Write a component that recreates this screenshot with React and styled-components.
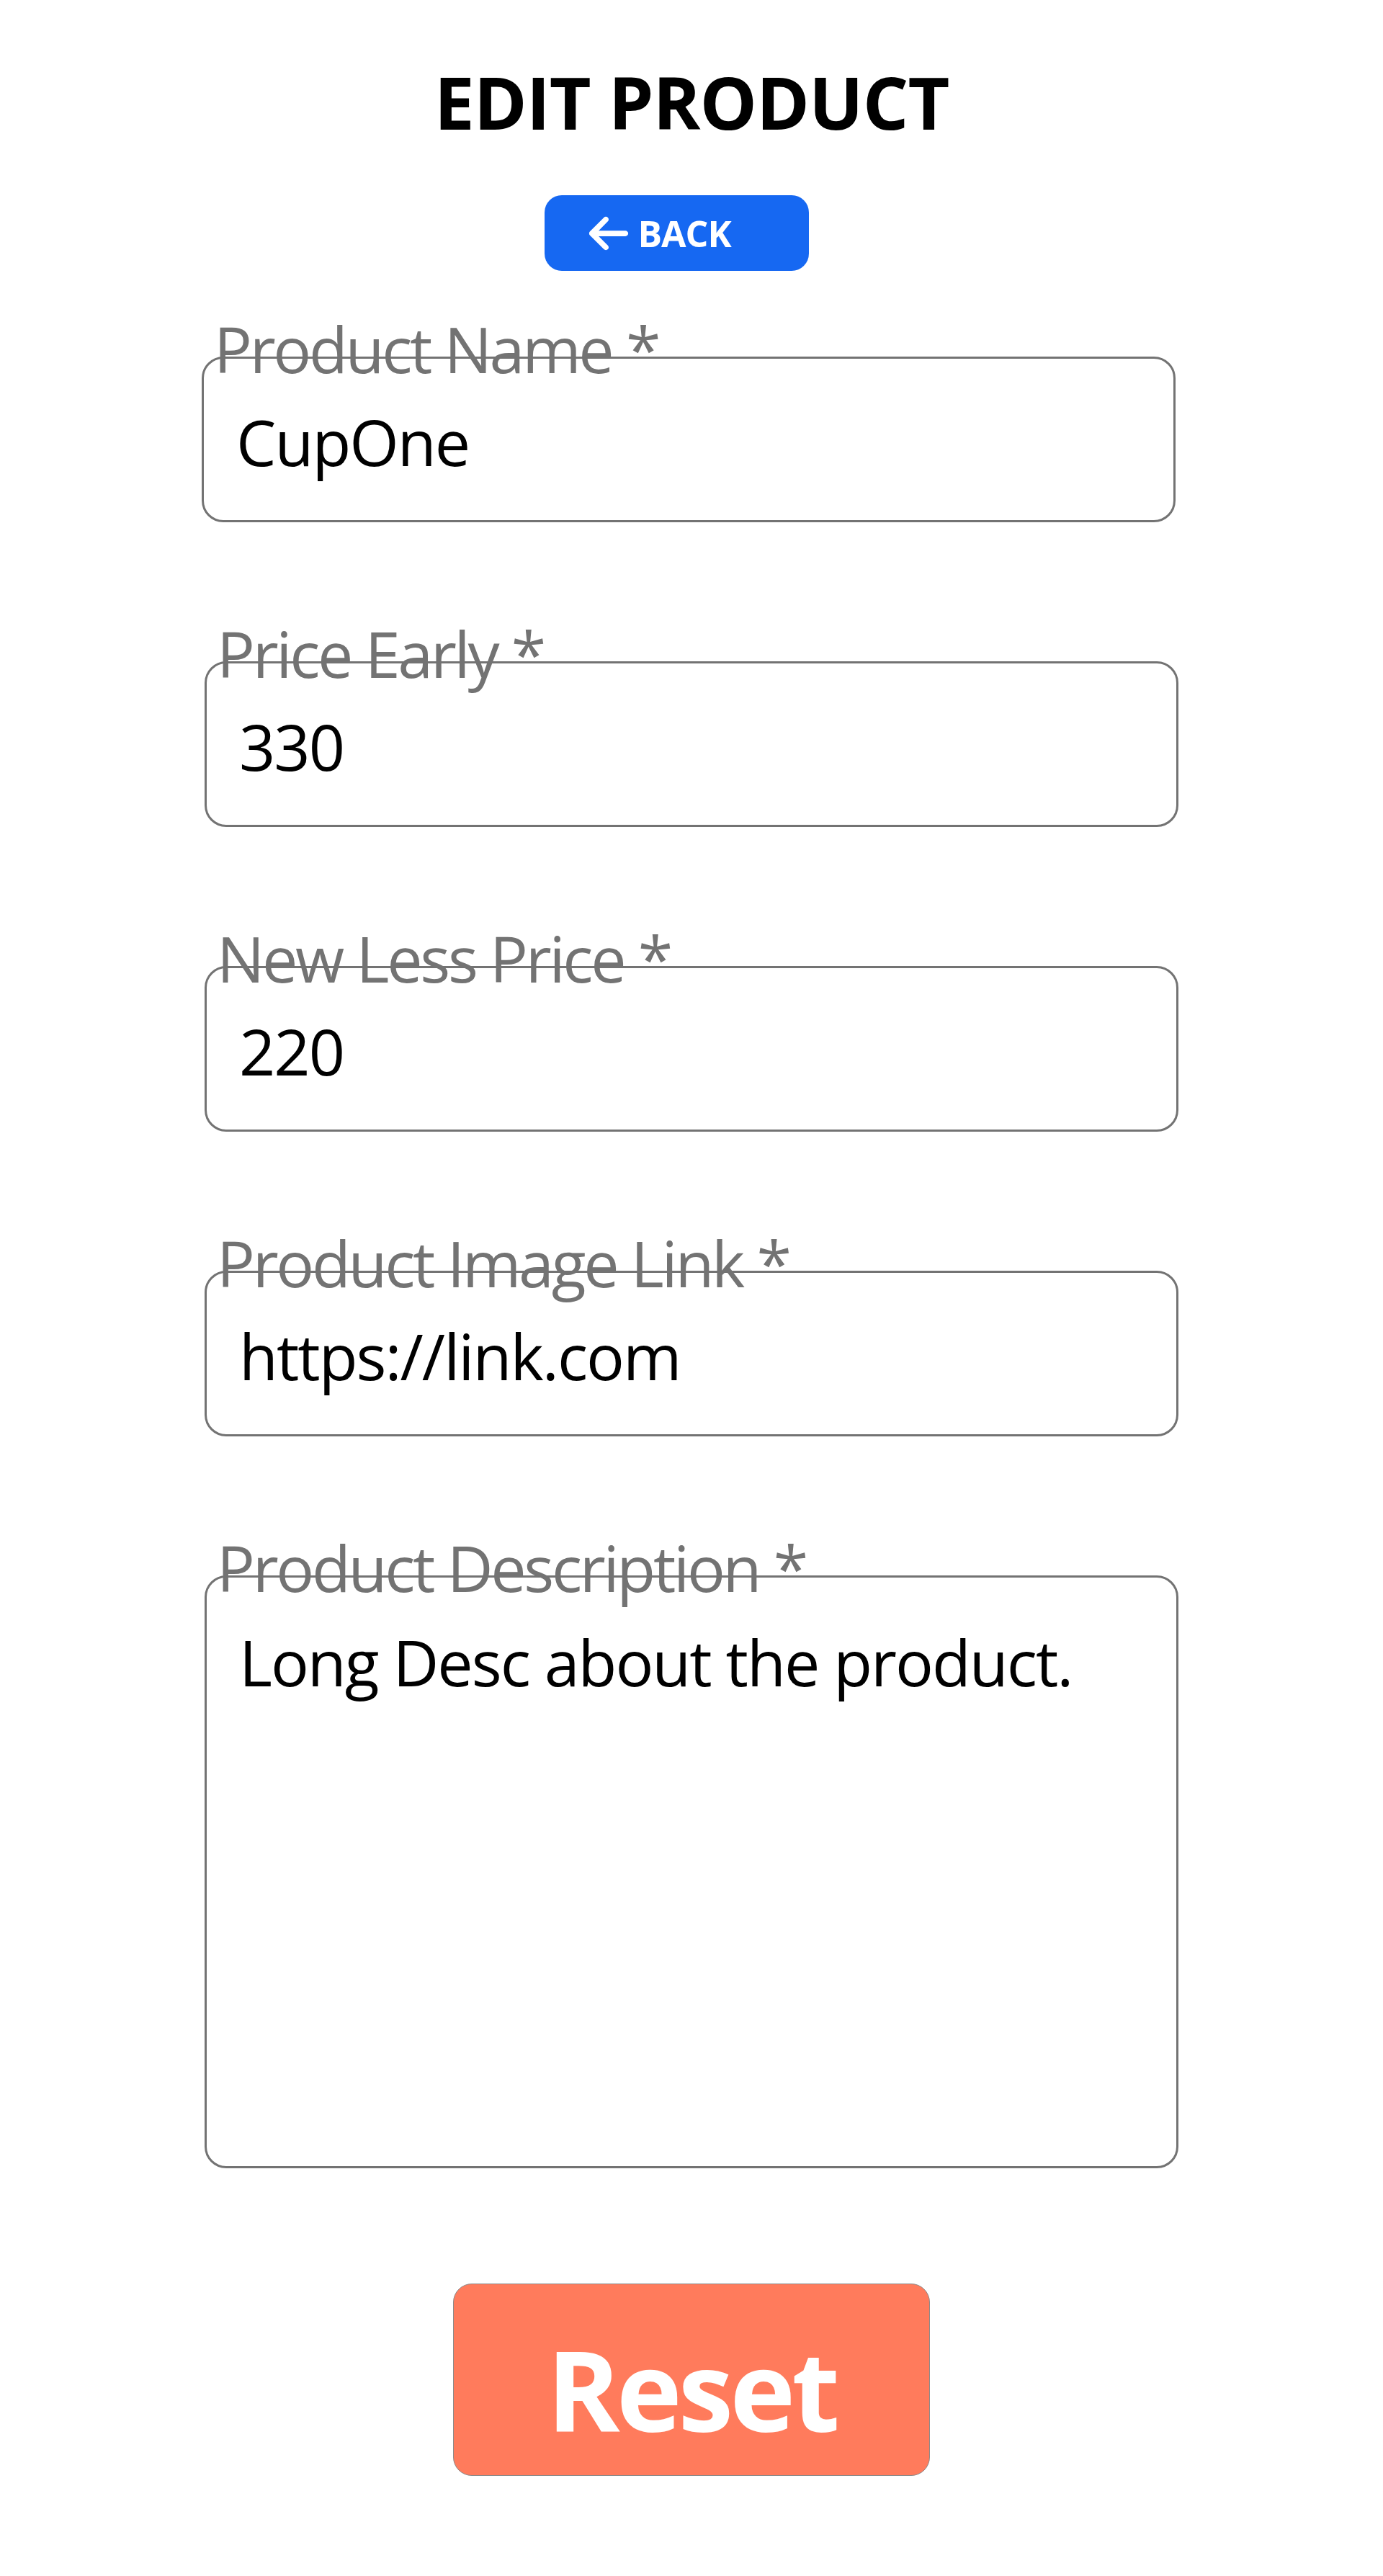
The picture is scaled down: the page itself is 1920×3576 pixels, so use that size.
import React from "react";
import styled, { createGlobalStyle } from "styled-components";
import { FaArrowLeft } from "react-icons/fa6";

const GlobalStyle = createGlobalStyle`
  html, body {
    margin: 0;
    padding: 0;
    background: #ffffff;
  }
  body {
    font-family: "Open Sans", "Noto Sans", sans-serif;
  }
  * { box-sizing: border-box; }
`;

const Page = styled.main`
  display: flex;
  flex-direction: column;
  align-items: center;
  padding: 91px 0 139px;
`;

const Title = styled.h1`
  margin: 0;
  font-size: 100px;
  line-height: 100px;
  font-weight: 700;
  color: #000;
  letter-spacing: -1px;
`;

const BackRow = styled.div`
  margin-top: 80px;
  width: 100%;
  display: flex;
  justify-content: center;
`;

const BackButton = styled.button`
  width: 367px;
  height: 105px;
  margin-right: 42px;
  padding: 0 0 0 58px;
  display: flex;
  align-items: center;
  gap: 10px;
  border: none;
  border-radius: 24px;
  background: #1668f2;
  color: #fff;
  font-family: inherit;
  font-size: 50px;
  font-weight: 700;
  line-height: 1;
  letter-spacing: -1px;
  cursor: pointer;
  svg { flex: none; }
`;

const Form = styled.form`
  margin-top: 64px;
  width: 1352px;
  display: flex;
  flex-direction: column;
  gap: 138px;
`;

const Field = styled.div`
  display: flex;
  flex-direction: column;
  margin-left: ${(p) => (p.$shift ? `${p.$shift}px` : "0")};
  margin-right: ${(p) => (p.$shift ? `${-p.$shift}px` : "0")};
`;

const Label = styled.label`
  position: relative;
  z-index: 1;
  display: block;
  font-size: 88px;
  line-height: 88px;
  color: #737373;
  padding-left: 17px;
  margin-bottom: -33px;
  letter-spacing: -3.3px;
  white-space: nowrap;
`;

const boxStyles = `
  width: 100%;
  border: 3px solid #737373;
  border-radius: 30px;
  background: transparent;
  font-family: "Open Sans", "Noto Sans", sans-serif;
  font-size: 88px;
  color: #000;
  outline: none;
  letter-spacing: -2px;
`;

const Input = styled.input`
  ${boxStyles}
  height: 230px;
  padding: 6px 40px 0 45px;
`;

const TextArea = styled.textarea`
  ${boxStyles}
  height: 823px;
  padding: 57px 45px 0 45px;
  line-height: normal;
  resize: none;
  display: block;
`;

const ResetButton = styled.button`
  margin-top: 160px;
  width: 662px;
  height: 267px;
  padding: 22px 0 0;
  border: 1px solid #8a8a8a;
  border-radius: 26px;
  background: #ff7b5c;
  color: #fff;
  font-family: inherit;
  font-size: 154px;
  font-weight: 700;
  line-height: 1;
  letter-spacing: -5px;
  cursor: pointer;
`;

const fields = [
  { id: "name", label: "Product Name *", value: "CupOne", shift: -4 },
  { id: "early", label: "Price Early *", value: "330" },
  { id: "less", label: "New Less Price *", value: "220" },
  { id: "image", label: "Product Image Link *", value: "https://link.com" },
];

export default function App() {
  return (
    <>
      <GlobalStyle />
      <Page>
        <Title>EDIT PRODUCT</Title>
        <BackRow>
          <BackButton type="button">
            <FaArrowLeft size={62} />
            BACK
          </BackButton>
        </BackRow>
        <Form onSubmit={(e) => e.preventDefault()}>
          {fields.map((f) => (
            <Field key={f.id} $shift={f.shift}>
              <Label htmlFor={f.id}>{f.label}</Label>
              <Input id={f.id} defaultValue={f.value} />
            </Field>
          ))}
          <Field>
            <Label htmlFor="desc">Product Description *</Label>
            <TextArea id="desc" defaultValue="Long Desc about the product." />
          </Field>
        </Form>
        <ResetButton type="reset">Reset</ResetButton>
      </Page>
    </>
  );
}
